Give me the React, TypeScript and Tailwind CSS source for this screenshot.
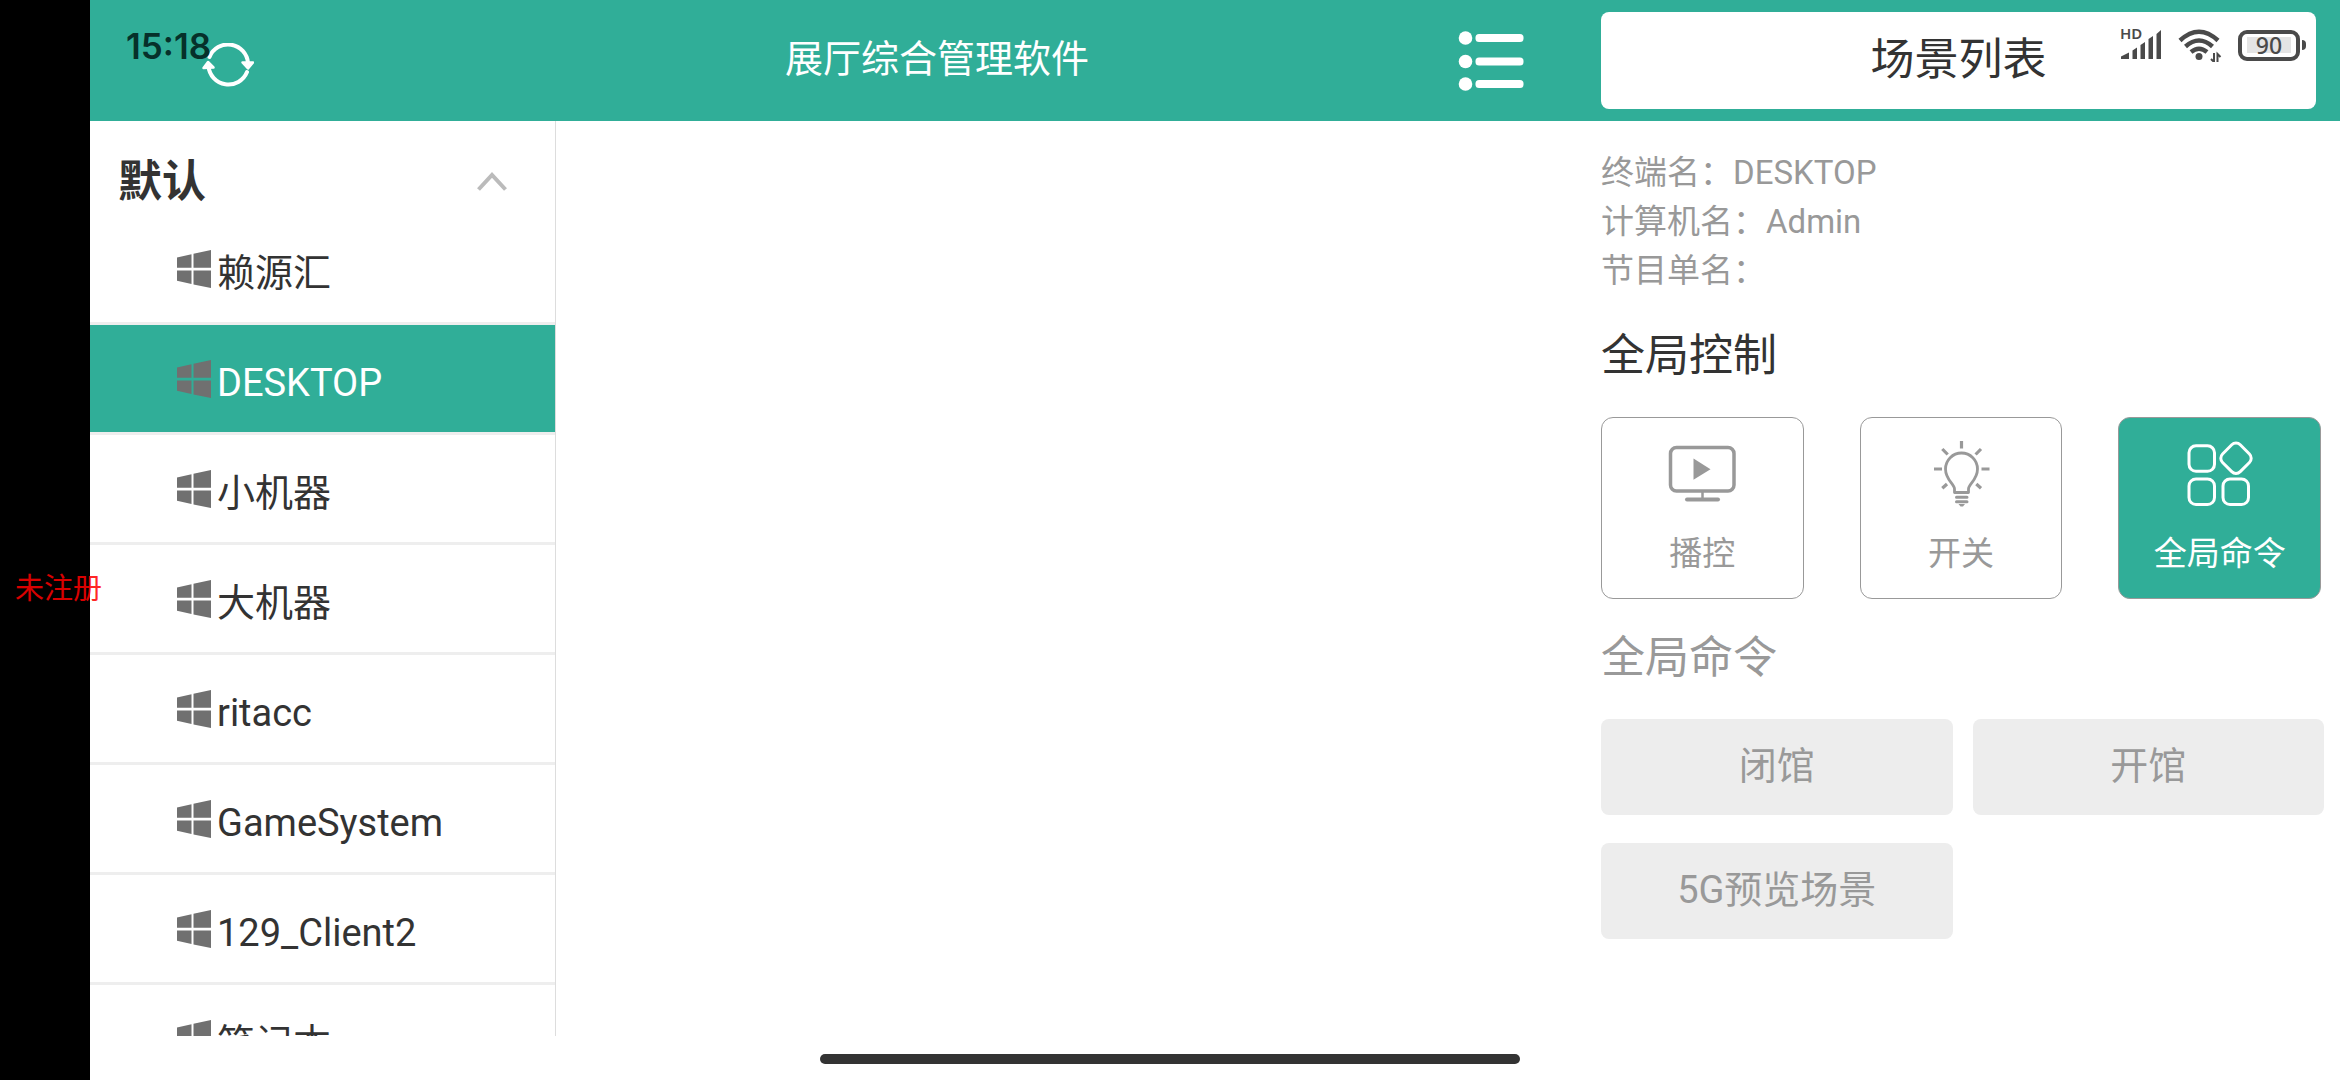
import React, { useState } from "react";

const machines = ["赖源汇", "DESKTOP", "小机器", "大机器", "ritacc", "GameSystem", "129_Client2", "笔记本"];
const commands = ["闭馆", "开馆", "5G预览场景"];

function WindowsIcon() {
  return (
    <svg viewBox="0 0 34 38" className="h-[38px] w-[34px] shrink-0 fill-[#707070]" aria-hidden="true">
      <path d="M0 7.500 14.500 4.200V17.800H0ZM16.500 3.700 34 0V17.800H16.500ZM0 20.500H14.500V34L0 30.800ZM16.500 20.500H34V38L16.500 34.400Z" />
    </svg>
  );
}

function SyncIcon() {
  return (
    <svg viewBox="0 0 52 44" className="h-11 w-[52px]" fill="none" stroke="#fff" strokeWidth="4" strokeLinecap="round" aria-hidden="true">
      <path d="M7.500 14A20 20 0 0 1 46 20" />
      <path d="M45 29A20 20 0 0 1 6.500 23" />
      <path d="M40.500 19.500 46 25.500 51 19.500Z" fill="#fff" strokeWidth="2.500" strokeLinejoin="round" />
      <path d="M1.500 25 6 19 11.500 24.500Z" fill="#fff" strokeWidth="2.500" strokeLinejoin="round" />
    </svg>
  );
}

function ListIcon() {
  return (
    <svg viewBox="0 0 66 60" className="h-[60px] w-[66px]" fill="#fff" aria-hidden="true">
      {[7, 30.5, 53].map((y) => (
        <g key={y}>
          <circle cx="7.500" cy={y} r="6.800" />
          <rect x="17.500" y={y - 4} width="48" height="8" rx="3.500" />
        </g>
      ))}
    </svg>
  );
}

function MonitorIcon() {
  return (
    <svg viewBox="0 0 68 68" className="size-[68px]" fill="none" stroke="currentColor" strokeWidth="3.500" aria-hidden="true">
      <rect x="2.500" y="7.500" width="63.500" height="43.500" rx="6" />
      <path d="M34.500 52V59" strokeWidth="2.500" />
      <path d="M19 59.500H50" strokeWidth="4" strokeLinecap="round" />
      <path d="M25.500 18.500V39.700L42.500 29.300Z" fill="currentColor" stroke="none" />
    </svg>
  );
}

function BulbIcon() {
  return (
    <svg viewBox="0 0 68 68" className="size-[68px]" fill="none" stroke="currentColor" strokeWidth="2.800" aria-hidden="true">
      <path d="M27.500 52.500V49C27.500 44 18.500 40 18.500 29A16 16 0 0 1 50.500 29C50.500 40 41.500 44 41.500 49V52.500Z" strokeLinejoin="round" />
      <path d="M29.500 57.300H40M29.500 61.700H40" strokeWidth="3" strokeLinecap="round" />
      <path d="M31.500 64H38L36 66.500H33.500Z" fill="currentColor" stroke="none" />
      <path d="M34.500 1V8.500M15.300 9 20.700 14.500M54 9 48.600 14.500M7 29H15M54.500 29H62.500M15.300 48.300 20 44M54 48.300 49.300 44" strokeWidth="3.200" />
    </svg>
  );
}

function GridIcon() {
  return (
    <svg viewBox="0 0 68 68" className="size-[68px]" fill="none" stroke="currentColor" strokeWidth="3" aria-hidden="true">
      <rect x="3" y="5.800" width="25.500" height="25.500" rx="7" />
      <rect x="3" y="39" width="25.500" height="25.500" rx="7" />
      <rect x="37" y="39" width="25.500" height="25.500" rx="7" />
      <rect x="37.500" y="5.700" width="25" height="25" rx="6" transform="rotate(45 50 18.200)" />
    </svg>
  );
}

function StatusIcons() {
  return (
    <div className="absolute top-6 right-[34px] flex items-center gap-4 text-[#4a4a4a]">
      <svg viewBox="0 0 42 42" className="size-[42px]" fill="currentColor" aria-label="HD signal">
        <text x="0" y="15" fontSize="15" fontWeight="600" fontFamily="Noto Sans, sans-serif">HD</text>
        <path d="M1 35V32.500L9 28.500V35ZM12.500 26.500 17 23.500V35H12.500ZM20.500 21 25 18V35H20.500ZM28.500 15 33 12V35H28.500ZM36.500 10 41 6V35H36.500Z" />
      </svg>
      <svg viewBox="0 0 44 34" className="h-[34px] w-[44px]" fill="none" stroke="currentColor" strokeWidth="4.500" aria-label="Wi-Fi">
        <path d="M2 12.500Q21 -5 40 12.500" />
        <path d="M7.500 18.500Q21 6.500 34.500 18.500" />
        <path d="M13 24Q21 17.500 29 24" />
        <circle cx="21" cy="28.500" r="3.500" fill="currentColor" stroke="none" />
        <path d="M36 25V34L33 31M39.500 34V26L42.500 29" strokeWidth="2" />
      </svg>
      <div className="flex items-center gap-0.5">
        <div className="flex h-[31px] w-[62px] items-center justify-center rounded-[9px] border-4 border-current">
          <span className="w-11 bg-[#e4e4e4] text-center font-['Noto_Sans',sans-serif] text-[23px] leading-4 font-medium">90</span>
        </div>
        <div className="h-2.5 w-1 rounded-r-sm bg-current" />
      </div>
    </div>
  );
}

const modes = [
  { name: "播控", Icon: MonitorIcon },
  { name: "开关", Icon: BulbIcon },
  { name: "全局命令", Icon: GridIcon },
];

export default function App() {
  const [selected, setSelected] = useState("DESKTOP");
  const [mode, setMode] = useState("全局命令");
  const [open, setOpen] = useState(true);

  return (
    <div className="relative flex h-screen overflow-hidden bg-white font-[Roboto,'Noto_Sans_CJK_SC',sans-serif] text-[#333]">
      <div className="w-[90px] shrink-0 bg-black" />
      <div className="flex min-w-0 flex-1 flex-col">
        <header className="relative flex h-[121px] shrink-0 items-center bg-[#30ae98]">
          <div className="w-[326px] shrink-0 pt-2 pl-[112px]">
            <button type="button" aria-label="刷新" className="block"><SyncIcon /></button>
          </div>
          <time className="absolute top-6 left-9 font-[Inter,sans-serif] text-[35px] leading-11 font-semibold text-[#06302a]">15:18</time>
          <h1 className="flex-1 pb-1 text-center text-[38px] leading-[56px] text-white">展厅综合管理软件</h1>
          <button type="button" aria-label="菜单" className="mr-[77px] shrink-0"><ListIcon /></button>
          <div className="w-[739px] shrink-0 pr-6">
            <button type="button" className="h-[97px] w-full rounded-lg bg-white pb-0.5 text-[44px]">场景列表</button>
          </div>
          <StatusIcons />
        </header>

        <div className="flex min-h-0 flex-1 pb-11">
          <nav className="w-[466px] shrink-0 overflow-hidden border-r border-[#ddd]">
            <button type="button" aria-expanded={open} onClick={() => setOpen(!open)} className="flex h-[94px] w-full items-center justify-between pt-7 pr-12 pl-7">
              <span className="text-[44px] leading-[64px] font-bold">默认</span>
              <svg viewBox="0 0 30 20" className="h-5 w-[30px]" fill="none" stroke="#bbb" strokeWidth="4" aria-hidden="true">
                <path d="M1.500 17.500 15 3 28.500 17.500" />
              </svg>
            </button>
            {open && (
              <ul>
                {machines.map((name) => (
                  <li key={name} className="border-b-3 border-[#eee]">
                    <button
                      type="button"
                      onClick={() => setSelected(name)}
                      className={`flex h-[107px] w-full items-center gap-1.5 pl-[87px] text-[38px] ${name === selected ? "bg-[#30ae98] text-white" : ""}`}
                    >
                      <WindowsIcon />
                      <span className="pt-2.5">{name}</span>
                    </button>
                  </li>
                ))}
              </ul>
            )}
          </nav>

          <main className="flex-1" />

          <aside className="w-[739px] shrink-0 pt-[27px] pr-4">
            <dl className="text-[33px] leading-[49px] text-[#999]">
              <div className="flex"><dt>终端名：</dt><dd>DESKTOP</dd></div>
              <div className="flex"><dt>计算机名：</dt><dd>Admin</dd></div>
              <div className="flex"><dt>节目单名：</dt><dd /></div>
            </dl>
            <h2 className="mt-[29px] text-[44px] leading-[64px]">全局控制</h2>
            <div className="mt-[29px] grid grid-cols-3 gap-14 pr-[3px]">
              {modes.map(({ name, Icon }) => (
                <button
                  key={name}
                  type="button"
                  aria-pressed={name === mode}
                  onClick={() => setMode(name)}
                  className={`flex h-[182px] flex-col items-center rounded-xl border border-[#999] pt-[22px] text-[33px] ${name === mode ? "bg-[#30ae98] text-white" : "text-[#999]"}`}
                >
                  <Icon />
                  <span className="mt-[22px] leading-[48px]">{name}</span>
                </button>
              ))}
            </div>
            <h2 className="mt-[27px] text-[44px] leading-[64px] text-[#999]">全局命令</h2>
            <div className="mt-[29px] grid grid-cols-2 gap-x-5 gap-y-7">
              {commands.map((name) => (
                <button key={name} type="button" className="h-24 rounded-lg bg-[#ededed] pb-0.5 text-[38px] text-[#999]">{name}</button>
              ))}
            </div>
          </aside>
        </div>
      </div>
      <p className="absolute top-[569px] left-[15px] text-[29px] leading-10 text-[#ff0000]/85">未注册</p>
      <div className="absolute bottom-4 left-1/2 h-2.5 w-[700px] -translate-x-1/2 rounded-full bg-[#333]" />
    </div>
  );
}
